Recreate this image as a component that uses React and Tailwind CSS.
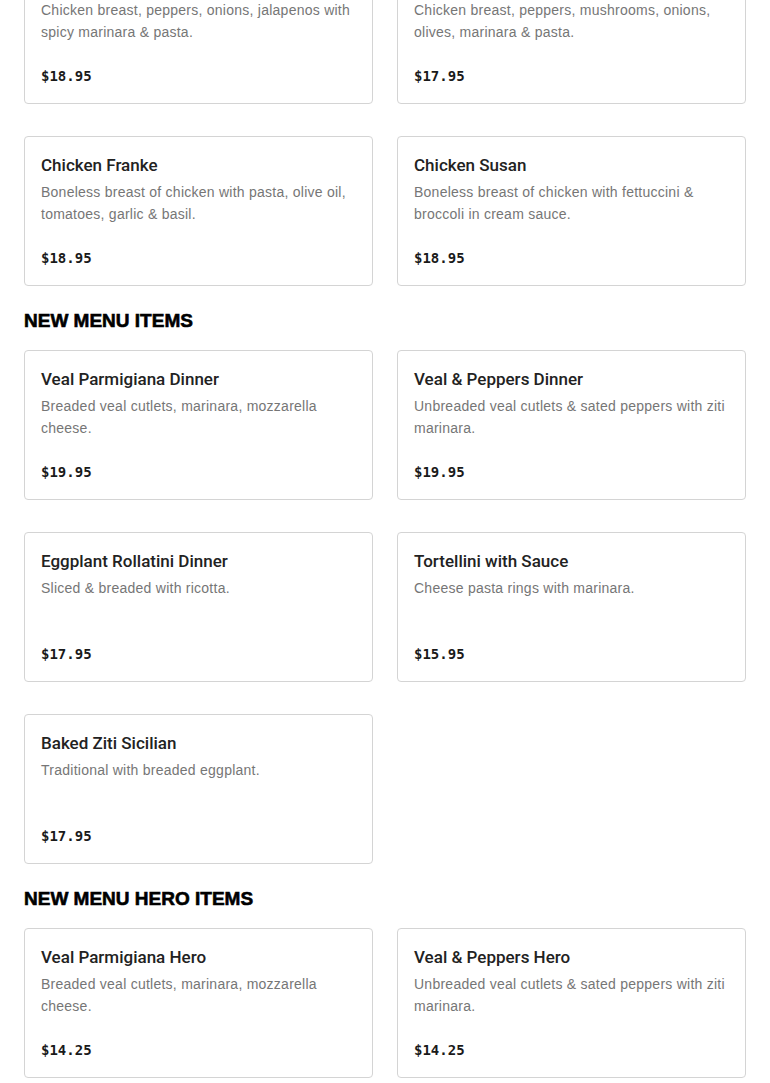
import React from 'react';

const sections = [
    {
        title: null,
        items: [
            { name: 'Chicken Diavolo', desc: 'Chicken breast, peppers, onions, jalapenos with spicy marinara & pasta.', price: '$18.95' },
            { name: 'Chicken Scarpariello', desc: 'Chicken breast, peppers, mushrooms, onions, olives, marinara & pasta.', price: '$17.95' },
            { name: 'Chicken Franke', desc: 'Boneless breast of chicken with pasta, olive oil, tomatoes, garlic & basil.', price: '$18.95' },
            { name: 'Chicken Susan', desc: 'Boneless breast of chicken with fettuccini & broccoli in cream sauce.', price: '$18.95' },
        ],
    },
    {
        title: 'NEW MENU ITEMS',
        items: [
            { name: 'Veal Parmigiana Dinner', desc: 'Breaded veal cutlets, marinara, mozzarella cheese.', price: '$19.95' },
            { name: 'Veal & Peppers Dinner', desc: 'Unbreaded veal cutlets & sated peppers with ziti marinara.', price: '$19.95' },
            { name: 'Eggplant Rollatini Dinner', desc: 'Sliced & breaded with ricotta.', price: '$17.95' },
            { name: 'Tortellini with Sauce', desc: 'Cheese pasta rings with marinara.', price: '$15.95' },
            { name: 'Baked Ziti Sicilian', desc: 'Traditional with breaded eggplant.', price: '$17.95' },
        ],
    },
    {
        title: 'NEW MENU HERO ITEMS',
        items: [
            { name: 'Veal Parmigiana Hero', desc: 'Breaded veal cutlets, marinara, mozzarella cheese.', price: '$14.25' },
            { name: 'Veal & Peppers Hero', desc: 'Unbreaded veal cutlets & sated peppers with ziti marinara.', price: '$14.25' },
        ],
    },
];

const MenuCard = ({ item }) => (
    <div className="h-[150px] flex flex-col border border-[#d4d4d4] rounded-[4px] bg-white px-4 pt-4 pb-[15px]">
        <h3 className="text-[17px] leading-6 font-medium text-[#222] font-['Roboto',Arial,sans-serif]">{item.name}</h3>
        <p className="mt-1 text-[14px] leading-[22px] tracking-[0.25px] text-[#767676]">{item.desc}</p>
        <span className="mt-auto text-[14px] leading-6 font-bold text-[#1a1a1a] font-['DejaVu_Sans_Mono',monospace]">{item.price}</span>
    </div>
);

const App = () => {
    return (
        <div className="min-h-screen bg-white font-['Liberation_Sans',Arial,sans-serif] overflow-hidden">
            {/* page is scrolled: first row of cards is cut off at the top */}
            <div className="px-6 -mt-[46px] flex flex-col">
                {sections.map((section, i) => (
                    <div key={i} className={i > 0 ? 'mt-[21px]' : ''}>
                        {section.title && (
                            <h2 className="text-[19px] leading-7 font-bold text-black mb-[15px] [-webkit-text-stroke:0.6px_black]">
                                {section.title}
                            </h2>
                        )}
                        <div className="grid grid-cols-2 gap-x-6 gap-y-8">
                            {section.items.map((item) => (
                                <MenuCard key={item.name} item={item} />
                            ))}
                        </div>
                    </div>
                ))}
            </div>
        </div>
    );
};

export default App;
